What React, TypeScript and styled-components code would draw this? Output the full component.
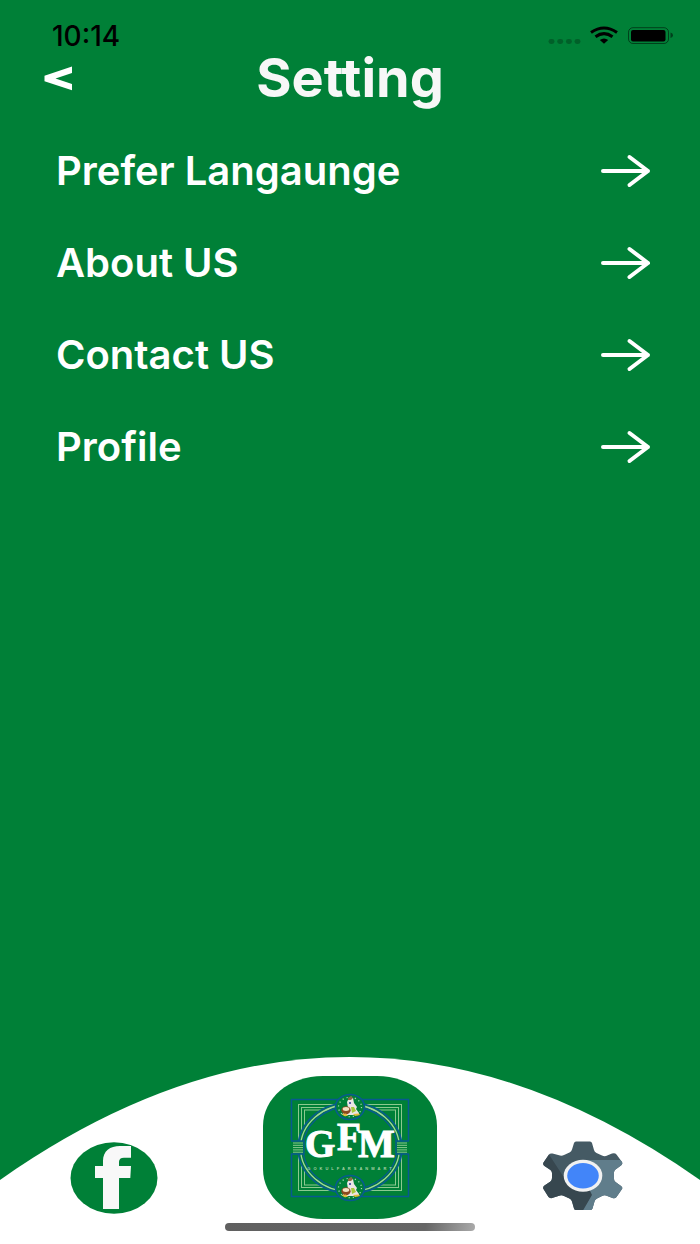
import React from 'react';
import styled, { createGlobalStyle } from 'styled-components';

const GREEN = '#008037';

const GlobalStyle = createGlobalStyle`
  *, *::before, *::after { box-sizing: border-box; }
  body { margin: 0; background: ${GREEN}; font-family: Inter, sans-serif; }
`;

const Screen = styled.div`
  min-height: 100vh;
  display: flex;
  flex-direction: column;
  background: ${GREEN};
  color: #fff;
`;

const StatusBar = styled.div`
  display: flex;
  align-items: center;
  justify-content: space-between;
  height: 52px;
  padding: 20px 26px 0 52px;
  color: #000;
`;

const Clock = styled.time`
  font-size: 28px;
  line-height: 32px;
  font-weight: 500;
`;

const Header = styled.header`
  display: grid;
  grid-template-columns: 1fr auto 1fr;
  align-items: center;
  height: 52px;
  padding: 0 40px;
`;

const BackButton = styled.button`
  display: flex;
  justify-self: start;
  padding: 4px;
  border: 0;
  background: none;
  color: #fff;
  cursor: pointer;
`;

const Title = styled.h1`
  margin: 0;
  color: #f7f7f7;
  font-size: 54px;
  line-height: 52px;
  font-weight: 700;
`;

const Menu = styled.nav`
  display: flex;
  flex-direction: column;
  padding: 21px 48px 0 56px;
`;

const MenuLink = styled.a`
  display: flex;
  align-items: center;
  justify-content: space-between;
  height: 92px;
  color: #fff;
  font-size: 40px;
  line-height: 44px;
  font-weight: 600;
  text-decoration: none;
`;

const Footer = styled.footer`
  position: relative;
  display: flex;
  flex-direction: column;
  align-items: center;
  margin-top: auto;
  padding: 19px 70px 13px;
`;

const Hill = styled.svg`
  position: absolute;
  inset: 0;
  width: 100%;
  height: 100%;
`;

const TabBar = styled.nav`
  position: relative;
  display: grid;
  grid-template-columns: 1fr auto 1fr;
  align-items: end;
  width: 100%;
`;

const Tab = styled.a<{ $side: 'start' | 'center' | 'end' }>`
  display: flex;
  justify-self: ${({ $side }) => $side};
`;

const HomeIndicator = styled.div`
  position: relative;
  width: 250px;
  height: 8px;
  margin-top: 4px;
  border-radius: 4px;
  background: linear-gradient(100deg, #606060 0%, #666 80%, #aaa 100%);
`;

const Arrow = () => (
  <svg width="52" height="36" viewBox="0 0 52 36" fill="none" stroke="#fff" strokeWidth="4" strokeLinecap="round" strokeLinejoin="round" aria-hidden="true">
    <path d="M3 18H48M29.500 4L48 18L29.500 32" />
  </svg>
);

const StatusIcons = () => (
  <svg width="126" height="20" viewBox="0 0 126 20" aria-hidden="true">
    <g fill="#000" fillOpacity=".25">
      <rect x="0.500" y="13" width="6" height="5" rx="2.400" />
      <rect x="9.200" y="13" width="6" height="5" rx="2.400" />
      <rect x="17.900" y="13" width="6" height="5" rx="2.400" />
      <rect x="26.500" y="13" width="6" height="5" rx="2.400" />
    </g>
    <g fill="none" stroke="#000" strokeWidth="3">
      <path d="M43 6.500Q56 -2.500 69 6.500" />
      <path d="M47.500 10.800Q56 4.500 64.500 10.800" />
    </g>
    <path d="M51.800 14Q56 10.800 60.200 14L56 17.800Z" />
    <rect x="80.500" y="1.700" width="40" height="15.800" rx="4.500" fill="none" stroke="#000" strokeOpacity=".5" />
    <rect x="83" y="4" width="34.500" height="11.500" rx="2" />
    <path d="M122.500 6.500Q125 7 125 9.300T122.500 12Z" fillOpacity=".5" />
  </svg>
);

const FacebookIcon = () => (
  <svg width="88" height="77" viewBox="0 0 88 77" aria-hidden="true">
    <ellipse cx="44" cy="36" rx="43.500" ry="35.700" fill={GREEN} />
    <path d="M33 67V36H25V24H33V19C33 9 40 4 50 4H61V15.700H54Q49 15.700 49 20V24H61L60.300 36H49V67Z" fill="#f8f8f8" />
  </svg>
);

const GearIcon = () => (
  <svg width="94" height="78" viewBox="0 0 94 78" aria-hidden="true">
    <defs>
      <clipPath id="gear">
        <path d="M40 0.500H54Q55.500 0.500 56 2L58 9Q58.500 11 60.500 12L66 14.500Q68 15.500 70 15L76 12.500Q79 11.500 80.500 13.500L86 21Q87 23 85 24.500L79.500 28.500Q78 29.500 78 31.500V38Q78 40 79.500 41L85 45Q87 46.500 86 48L80.500 56Q79 58 76.500 57L70 54.500Q68 54 66 55L61 57.500Q59 58.500 58.500 60.500L56.500 67.500Q56 69 54 69H40Q38.500 69 38 67.500L36 60.500Q35.500 58.500 33.500 57.500L28 55Q26 54 24 54.500L16 57Q14 57.500 12.500 56L7.500 48Q6.500 46 8.500 44.500L14.500 40.500Q16 39 16 37V32Q16 30.500 14.500 29L8.500 25Q6.500 23.500 7.500 21.500L13 13.500Q14 12 16.500 12.500L24 14.500Q26 15 28 14L33.500 11.500Q35.500 10.500 36 8.500L38 2Q38.500 0.500 40 0.500Z" />
      </clipPath>
    </defs>
    <g clipPath="url(#gear)">
      <rect width="94" height="78" fill="#455a64" />
      <path d="M12 12L27 35L58 50L44 78H0V24Z" fill="#37474f" />
      <path d="M47 19H94V78H42L56 54L47 35Z" fill="#607d8b" />
    </g>
    <ellipse cx="47" cy="34.700" rx="19.300" ry="16" fill="#f1f1f1" />
    <ellipse cx="47" cy="34.700" rx="15.800" ry="12.800" fill="#4285f9" />
  </svg>
);

const Medallion = ({ y }: { y: number }) => (
  <g transform={`translate(87 ${y})`}>
    <ellipse rx="14.500" ry="12.500" fill={GREEN} stroke="#075a91" strokeWidth="1.500" />
    <ellipse rx="11.500" ry="9.700" fill="none" stroke="#a5d3b5" strokeWidth="1.200" strokeDasharray="1.200 3" />
    <path d="M-3 -5L-1 -9H3L4 -4L7 0L6 2L9 6V8H-8L-6 5L-2 1Z" fill="#ebe5e5" />
    <path d="M-2 -9L1 -11L3 -9L1 -7L-2 -7Z" fill="#8d6a43" />
    <path d="M1 0L4 0L6 4L2 6Z" fill="#a5c83d" />
    <ellipse cx="-4" cy="3.200" rx="4.600" ry="4" fill="#8a4a20" />
    <ellipse cx="-4" cy="2" rx="3.300" ry="1.900" fill="#f3e3c4" />
    <path d="M-8 7L-4 6.500L-2 9L-6 9ZM3 7L9 6.500L10 8L5 9Z" fill="#e5b93c" />
    <path d="M-1 -5H1V-3H-1Z" fill="#5a5da8" />
  </g>
);

const GfmLogo = () => (
  <svg width="174" height="143" viewBox="0 0 174 143" role="img" aria-label="GFM">
    <path d="M60 0H114C148 0 174 22 174 50V93C174 121 148 143 114 143H60C26 143 0 121 0 93V50C0 22 26 0 60 0Z" fill={GREEN} />
    <g fill="none" stroke="#8cc98f" strokeWidth="1">
      <rect x="35.500" y="28.500" width="103" height="86" />
      <rect x="38.500" y="31.500" width="97" height="80" />
      <rect x="41.500" y="34" width="91" height="75" />
    </g>
    <rect x="28.500" y="23.500" width="117" height="97" fill="none" stroke="#075a91" strokeWidth="1.500" />
    <ellipse cx="87" cy="72" rx="52" ry="45.500" fill={GREEN} stroke="#075a91" strokeWidth="1.500" />
    <ellipse cx="87" cy="72" rx="49.500" ry="43.500" fill="none" stroke="#a5d39d" strokeWidth="1.300" />
    <ellipse cx="87" cy="72" rx="47" ry="41.500" fill="none" stroke="#075a91" strokeWidth="1.300" />
    <path d="M27 65H41V78H27ZM133 65H147V78H133Z" fill={GREEN} />
    <path d="M28 65H41V78H28M146 65H133V78H146" fill="none" stroke="#075a91" strokeWidth="1.400" />
    <path d="M30 67H40M30 69.300H40M30 71.600H40M30 73.900H40M30 76.200H40M134 67H144M134 69.300H144M134 71.600H144M134 73.900H144M134 76.200H144" stroke="#8cc98f" strokeWidth="1" />
    <Medallion y={31} />
    <Medallion y={112} />
    <g fill="#fff" stroke="#fff" strokeWidth="1" fontFamily="Liberation Serif, serif" fontWeight="700" fontSize="39">
      <text x="42" y="81">G</text>
      <text x="74" y="74">F</text>
      <text x="95" y="81">M</text>
    </g>
    <text x="88" y="94" textAnchor="middle" fill="#a5d3a5" fontFamily="Liberation Sans, sans-serif" fontWeight="700" fontSize="4" letterSpacing="3">GOKULFARSANMART</text>
  </svg>
);

const items = ['Prefer Langaunge', 'About US', 'Contact US', 'Profile'];

export default function App() {
  return (
    <Screen>
      <GlobalStyle />
      <StatusBar>
        <Clock>10:14</Clock>
        <StatusIcons />
      </StatusBar>
      <Header>
        <BackButton aria-label="Back">
          <svg width="30" height="26" viewBox="0 0 30 26" aria-hidden="true">
            <path d="M28 1.500V8L11.500 13.500L28 19V25.300L0.500 16.300V10.700Z" fill="#fff" />
          </svg>
        </BackButton>
        <Title>Setting</Title>
      </Header>
      <Menu>
        {items.map((label) => (
          <MenuLink href="#" key={label}>
            {label}
            <Arrow />
          </MenuLink>
        ))}
      </Menu>
      <Footer>
        <Hill viewBox="0 0 700 187" preserveAspectRatio="none" aria-hidden="true">
          <path d="M0 123Q350 -123 700 123V187H0Z" fill="#fff" />
        </Hill>
        <TabBar>
          <Tab href="#" $side="start" aria-label="Facebook"><FacebookIcon /></Tab>
          <Tab href="#" $side="center" aria-label="Home"><GfmLogo /></Tab>
          <Tab href="#" $side="end" aria-label="Settings"><GearIcon /></Tab>
        </TabBar>
        <HomeIndicator />
      </Footer>
    </Screen>
  );
}
